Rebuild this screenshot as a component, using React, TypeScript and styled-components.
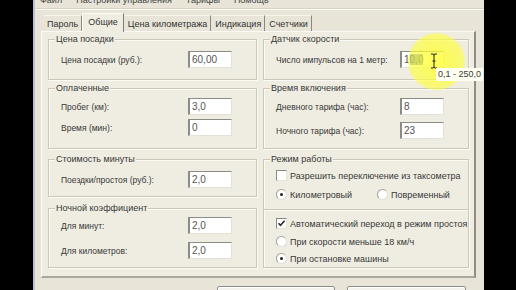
import styled, { createGlobalStyle } from "styled-components";

const GlobalStyle = createGlobalStyle`
  html, body {
    margin: 0;
    padding: 0;
    background: #000;
  }
  body {
    font-family: "Liberation Sans", Arial, sans-serif;
    font-size: 9px;
    color: #383838;
  }
`;

const Screen = styled.div`
  position: relative;
  display: flex;
  width: 516px;
  height: 290px;
  overflow: hidden;
  background: #000;
`;

const BlackSide = styled.div<{ w: number }>`
  width: ${(p) => p.w}px;
  flex: none;
  background: #000;
`;

const Window = styled.div`
  width: 451px;
  flex: none;
  display: flex;
  flex-direction: column;
  overflow: hidden;
  background: #e8e5d8;
  border-left: 2px solid #b7c2d6;
  box-sizing: border-box;

  & > * {
    flex: none;
  }
`;

const MenuBar = styled.div`
  height: 8px;
  display: flex;
  align-items: flex-end;
  gap: 14px;
  padding-left: 5px;
  overflow: hidden;
  border-bottom: 1px solid #d6d3c4;
`;

const MenuItem = styled.span`
  line-height: 12px;
  margin-bottom: 2px;
  white-space: nowrap;
  color: #444;
`;

const MenuShade = styled.div`
  height: 2px;
  border-top: 1px solid #fbfaf5;
`;

const Body = styled.div`
  display: flex;
  flex-direction: column;
  margin: 0 8px 0 6px;

  & > * {
    flex: none;
  }
`;

const TabStrip = styled.div`
  display: flex;
  align-items: flex-end;
  height: 19px;
  padding-left: 2px;
  position: relative;
  z-index: 1;
`;

const Tab = styled.div<{ active?: boolean }>`
  height: ${(p) => (p.active ? 19 : 16)}px;
  line-height: ${(p) => (p.active ? 17 : 16)}px;
  padding: 0 ${(p) => (p.active ? 5 : 3)}px;
  box-sizing: border-box;
  white-space: nowrap;
  background: ${(p) => (p.active ? "#efede2" : "#e8e5d8")};
  border-top: 1px solid ${(p) => (p.active ? "#fdfcf8" : "#f6f4ec")};
  border-left: 1px solid ${(p) => (p.active ? "#fdfcf8" : "transparent")};
  border-right: 1px solid ${(p) => (p.active ? "#7c7b74" : "#8a8880")};
  color: #333;
  margin-bottom: ${(p) => (p.active ? -1 : 0)}px;
`;

const Pane = styled.div`
  height: 247px;
  box-sizing: border-box;
  background: #efede2;
  border: 1px solid #fbfaf4;
  border-right: 2px solid #8f8d86;
  border-bottom: 2px solid #a9a79e;
  padding: 7px 6px 0 6px;
  display: grid;
  grid-template-columns: 209px 206px;
  column-gap: 6px;
  align-content: start;
`;

const Column = styled.div`
  display: flex;
  flex-direction: column;
`;

const Group = styled.div<{ h: number; gapTop: number }>`
  height: ${(p) => p.h}px;
  flex: none;
  margin-top: ${(p) => p.gapTop}px;
  box-sizing: border-box;
  border: 1px solid #cbc8b9;
  box-shadow: inset 1px 1px 0 #fbfaf4, 1px 1px 0 #fbfaf4;
  padding: 0 12px;
  display: flex;
  flex-direction: column;
`;

const Legend = styled.div<{ after: number }>`
  align-self: flex-start;
  height: 13px;
  line-height: 13px;
  margin: -7px 0 ${(p) => p.after}px -6px;
  padding: 0 1px;
  background: #efede2;
  white-space: nowrap;
`;

const Rows = styled.div<{ gap: number }>`
  display: flex;
  flex-direction: column;
  gap: ${(p) => p.gap}px;
`;

const FieldRow = styled.div<{ labelWidth: number }>`
  display: grid;
  grid-template-columns: ${(p) => p.labelWidth}px 44px;
  align-items: center;
  height: 17px;
`;

const Label = styled.span`
  white-space: nowrap;
  font-size: 8.5px;
`;

const Input = styled.div`
  height: 17px;
  box-sizing: border-box;
  background: #fff;
  border-top: 1px solid #8c8c86;
  border-left: 2px solid #8c8c86;
  border-right: 1px solid #e4e2d6;
  border-bottom: 1px solid #e4e2d6;
  padding-left: 2px;
  line-height: 15px;
  font-size: 10px;
  color: #555;
  white-space: nowrap;
`;

const Selected = styled.span`
  background: #7d9ccc;
  color: #24345a;
`;

const OptionRow = styled.div<{ mt?: number }>`
  display: flex;
  align-items: center;
  height: 15px;
  margin-top: ${(p) => p.mt ?? 0}px;
`;

const Option = styled.div<{ w?: number }>`
  display: flex;
  align-items: center;
  gap: 3px;
  flex: ${(p) => (p.w ? `0 0 ${p.w}px` : "none")};
  min-width: 0;
  white-space: nowrap;
`;

const CheckBox = styled.div`
  width: 11px;
  height: 11px;
  flex: none;
  box-sizing: border-box;
  background: #fff;
  border-top: 1px solid #8a8a84;
  border-left: 1px solid #8a8a84;
  border-right: 1px solid #e6e4d9;
  border-bottom: 1px solid #e6e4d9;
  display: flex;
  align-items: center;
  justify-content: center;
`;

const Radio = styled.div<{ on?: boolean }>`
  width: 11px;
  height: 11px;
  flex: none;
  box-sizing: border-box;
  border-radius: 50%;
  background: #fff;
  border: 1px solid #a3a29b;
  border-right-color: #e2e0d5;
  border-bottom-color: #e2e0d5;
  display: flex;
  align-items: center;
  justify-content: center;

  &::after {
    content: "";
    display: ${(p) => (p.on ? "block" : "none")};
    width: 3px;
    height: 3px;
    border-radius: 50%;
    background: #222;
  }
`;

const Separator = styled.div`
  margin: 7px -12px 5px -12px;
  border-top: 1px solid #cbc8b9;
  border-bottom: 1px solid #fbfaf4;
`;

const Footer = styled.div`
  display: flex;
  justify-content: flex-end;
  gap: 12px;
  padding: 8px 10px 0 0;
`;

const Button = styled.div<{ w: number }>`
  width: ${(p) => p.w}px;
  height: 23px;
  box-sizing: border-box;
  border: 1px solid #8f8e88;
  border-radius: 2px;
  background: #f3f2ec;
  box-shadow: inset 1px 1px 0 #fff;
`;

const Halo = styled.div`
  position: absolute;
  left: 408px;
  top: 33px;
  width: 57px;
  height: 57px;
  border-radius: 50%;
  background: radial-gradient(circle, rgba(255, 255, 40, 0.8) 0%, rgba(255, 255, 60, 0.65) 62%, rgba(255, 255, 80, 0) 100%);
  pointer-events: none;
`;

const Cursor = styled.svg`
  position: absolute;
  left: 430px;
  top: 53px;
`;

const Tooltip = styled.div`
  position: absolute;
  left: 436px;
  top: 68px;
  height: 13px;
  line-height: 13px;
  padding: 0 2px;
  background: #fffff2;
  color: #3a3a3a;
  font-size: 9px;
  white-space: nowrap;
`;

const CheckMark = () => (
  <svg width="9" height="9" viewBox="0 0 9 9">
    <path d="M1.5 4.2 L3.5 6.3 L7.6 1.8" fill="none" stroke="#2a2a2a" strokeWidth="1.6" />
  </svg>
);

const Field = ({ label, value, lw }: { label: string; value: React.ReactNode; lw: number }) => (
  <FieldRow labelWidth={lw}>
    <Label>{label}</Label>
    <Input>{value}</Input>
  </FieldRow>
);

export default function App() {
  return (
    <Screen>
      <GlobalStyle />
      <BlackSide w={33} />
      <Window>
        <MenuBar>
          <MenuItem>Файл</MenuItem>
          <MenuItem>Настройки управления</MenuItem>
          <MenuItem>Тарифы</MenuItem>
          <MenuItem>Помощь</MenuItem>
        </MenuBar>
        <MenuShade />
        <Body>
          <TabStrip>
            <Tab>Пароль</Tab>
            <Tab active>Общие</Tab>
            <Tab>Цена километража</Tab>
            <Tab>Индикация</Tab>
            <Tab>Счетчики</Tab>
          </TabStrip>
          <Pane>
            <Column>
              <Group h={41} gapTop={0}>
                <Legend after={5}>Цена посадки</Legend>
                <Field lw={127} label="Цена посадки (руб.):" value="60,00" />
              </Group>
              <Group h={61} gapTop={8}>
                <Legend after={3}>Оплаченные</Legend>
                <Rows gap={4}>
                  <Field lw={127} label="Пробег (км):" value="3,0" />
                  <Field lw={127} label="Время (мин):" value="0" />
                </Rows>
              </Group>
              <Group h={38} gapTop={10}>
                <Legend after={5}>Стоимость минуты</Legend>
                <Field lw={127} label="Поездки/простоя (руб.):" value="2,0" />
              </Group>
              <Group h={60} gapTop={11}>
                <Legend after={2}>Ночной коэффициент</Legend>
                <Rows gap={8}>
                  <Field lw={127} label="Для минут:" value="2,0" />
                  <Field lw={127} label="Для километров:" value="2,0" />
                </Rows>
              </Group>
            </Column>
            <Column>
              <Group h={41} gapTop={0}>
                <Legend after={5}>Датчик скорости</Legend>
                <Field
                  lw={124}
                  label="Число импульсов на 1 метр:"
                  value={
                    <>
                      1<Selected>0,0</Selected>
                    </>
                  }
                />
              </Group>
              <Group h={61} gapTop={8}>
                <Legend after={3}>Время включения</Legend>
                <Rows gap={7}>
                  <Field lw={124} label="Дневного тарифа (час):" value="8" />
                  <Field lw={124} label="Ночного тарифа (час):" value="23" />
                </Rows>
              </Group>
              <Group h={109} gapTop={10}>
                <Legend after={2}>Режим работы</Legend>
                <OptionRow>
                  <Option>
                    <CheckBox />
                    Разрешить переключение из таксометра
                  </Option>
                </OptionRow>
                <OptionRow mt={4}>
                  <Option w={101}>
                    <Radio on />
                    Километровый
                  </Option>
                  <Option>
                    <Radio />
                    Повременный
                  </Option>
                </OptionRow>
                <Separator />
                <OptionRow>
                  <Option>
                    <CheckBox>
                      <CheckMark />
                    </CheckBox>
                    Автоматический переход в режим простоя
                  </Option>
                </OptionRow>
                <OptionRow mt={3}>
                  <Option>
                    <Radio />
                    При скорости меньше 18 км/ч
                  </Option>
                </OptionRow>
                <OptionRow mt={2}>
                  <Option>
                    <Radio on />
                    При остановке машины
                  </Option>
                </OptionRow>
              </Group>
            </Column>
          </Pane>
          <Footer>
            <Button w={118} />
            <Button w={119} />
          </Footer>
        </Body>
      </Window>
      <BlackSide w={32} />
      <Halo />
      <Cursor width="8" height="16" viewBox="0 0 8 16">
        <path d="M1 1 H3 Q4 1 4 2.5 V13.5 Q4 15 3 15 H1 M7 1 H5 Q4 1 4 2.5 M4 13.5 Q4 15 5 15 H7 M2.5 8 H5.5" fill="none" stroke="#222" strokeWidth="1" />
      </Cursor>
      <Tooltip>0,1 - 250,0</Tooltip>
    </Screen>
  );
}
